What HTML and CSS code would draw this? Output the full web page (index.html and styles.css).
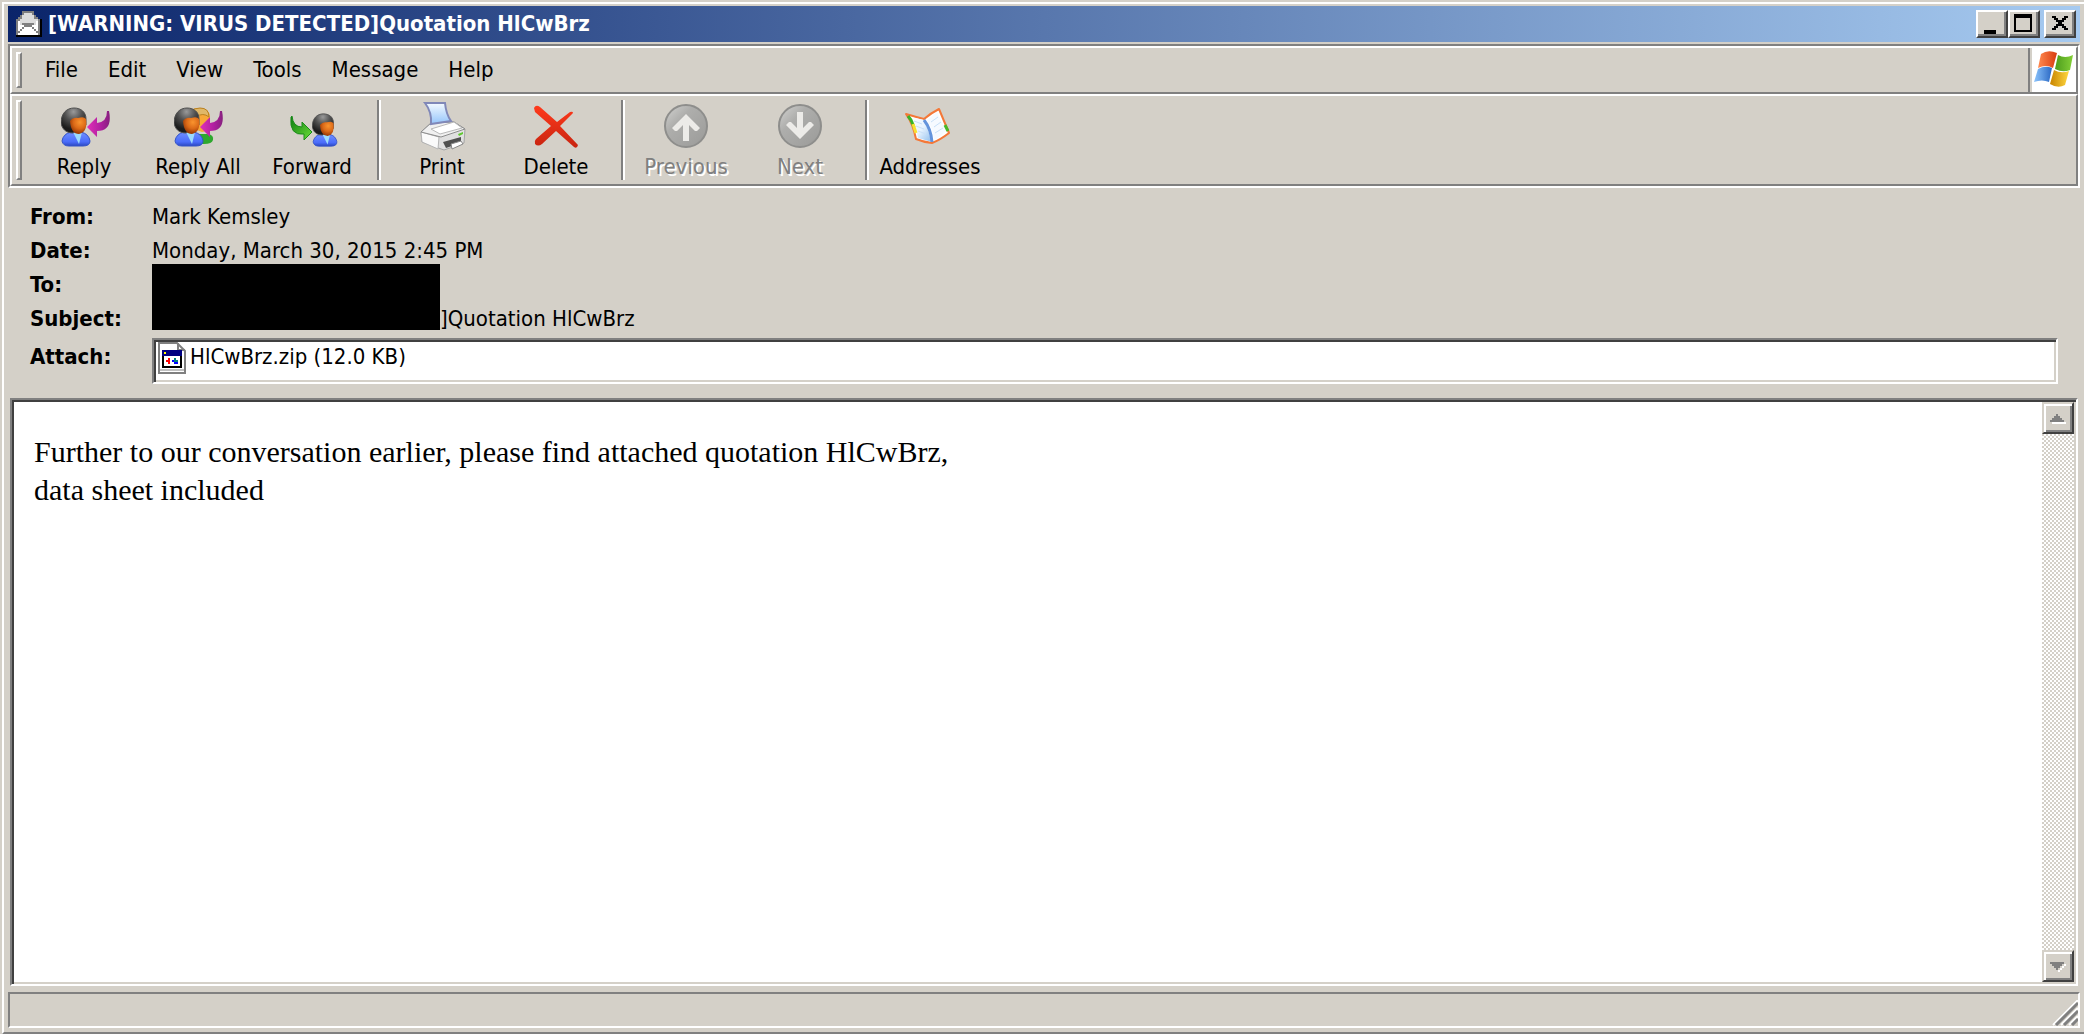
FILE: index.html
```html
<!DOCTYPE html>
<html lang="en">
<head>
    <meta charset="UTF-8">
    <meta name="viewport" content="width=device-width, initial-scale=1.0">
    <title>[WARNING: VIRUS DETECTED]Quotation HlCwBrz</title>
    <link rel="stylesheet" href="styles.css">
</head>
<body>

<!-- shared drawings -->
<svg class="defs" width="0" height="0" aria-hidden="true">
    <defs>
        <radialGradient id="hair" cx="0.5" cy="0.15" r="0.7">
            <stop offset="0" stop-color="#9a9a9a"/>
            <stop offset="0.5" stop-color="#505050"/>
            <stop offset="1" stop-color="#1c1c1c"/>
        </radialGradient>
        <radialGradient id="face" cx="0.6" cy="0.3" r="0.75">
            <stop offset="0" stop-color="#fa942e"/>
            <stop offset="0.5" stop-color="#dc6a18"/>
            <stop offset="1" stop-color="#8a2e00"/>
        </radialGradient>
        <linearGradient id="shirt" x1="0" y1="0" x2="0" y2="1">
            <stop offset="0" stop-color="#7090ff"/>
            <stop offset="0.7" stop-color="#4a6cfa"/>
            <stop offset="1" stop-color="#2c48c0"/>
        </linearGradient>
        <linearGradient id="purple" x1="0" y1="0" x2="1" y2="0">
            <stop offset="0" stop-color="#e030b8"/>
            <stop offset="0.6" stop-color="#b020a0"/>
            <stop offset="1" stop-color="#86207e"/>
        </linearGradient>
        <linearGradient id="green" x1="0" y1="0" x2="1" y2="1">
            <stop offset="0" stop-color="#0c7a10"/>
            <stop offset="1" stop-color="#6ce03a"/>
        </linearGradient>
        <linearGradient id="red" x1="0" y1="0" x2="0" y2="1">
            <stop offset="0" stop-color="#ff3a1c"/>
            <stop offset="1" stop-color="#c82410"/>
        </linearGradient>
        <linearGradient id="disc" x1="0" y1="0" x2="1" y2="1">
            <stop offset="0" stop-color="#d4d4d2"/>
            <stop offset="0.35" stop-color="#aeaeac"/>
            <stop offset="1" stop-color="#9a9a98"/>
        </linearGradient>
        <linearGradient id="paper" x1="0" y1="0" x2="0" y2="1">
            <stop offset="0" stop-color="#f4faff"/>
            <stop offset="1" stop-color="#94c4fa"/>
        </linearGradient>
        <linearGradient id="page" x1="0" y1="0" x2="1" y2="1">
            <stop offset="0" stop-color="#ffffff"/>
            <stop offset="0.5" stop-color="#e8f4ff"/>
            <stop offset="1" stop-color="#8cbcec"/>
        </linearGradient>
        <linearGradient id="flagRed"><stop offset="0" stop-color="#ff8a50"/><stop offset="1" stop-color="#d83c10"/></linearGradient>
        <linearGradient id="flagGreen"><stop offset="0" stop-color="#4c9c1c"/><stop offset="1" stop-color="#84d038"/></linearGradient>
        <linearGradient id="flagBlue"><stop offset="0" stop-color="#8cc4fc"/><stop offset="1" stop-color="#2a68c4"/></linearGradient>
        <linearGradient id="flagYellow"><stop offset="0" stop-color="#c88400"/><stop offset="1" stop-color="#ffd840"/></linearGradient>
    </defs>
    <symbol id="person" viewBox="0 0 30 40">
        <path d="M1 34 Q2 27 10 25 H20 Q28 27 29 34 Q29 39 22 39 H8 Q2 39 1 34z" fill="url(#shirt)" stroke="#3454c8"/>
        <path d="M12 25 h9 l-3 12z" fill="#9cdcfc"/>
        <path d="M0 16 C0 6 6 1 13 1 C20 1 25 5 25 12 V18 L12 26 C5 26 1 22 0 16z" fill="url(#hair)" stroke="#505050"/>
        <path d="M9 14 Q12 10 17 11 Q23 9 25 12 Q27 25 18 27 Q10 27 9 14z" fill="url(#face)"/>
    </symbol>
    <symbol id="arrowLeft" viewBox="0 0 24 28">
        <path d="M0 17 L10 7 V13 Q20 12 20 1 H22 Q26 21 10 21 V27z" fill="url(#purple)"/>
    </symbol>
</svg>

<div class="window">
    <header class="titlebar">
        <svg class="app-icon" width="26" height="26" viewBox="0 0 26 26" aria-hidden="true">
            <path d="M0 8 H2 V6 H4 V4 H6 V0 H18 V4 H20 V6 H22 V8 H24 V24 H0z" fill="#808080"/>
            <path d="M4 8 H6 V4 H8 V2 H16 V4 H18 V8 H22 V14 H18 V12 H6 V14 H4z" fill="#dcdcdc"/>
            <path d="M2 10 H4 V14 H8 V16 H6 V18 H4 V20 H2z M22 10 V20 H20 V18 H18 V16 H16 V14 H20 V10z" fill="#fff"/>
            <path d="M2 24 V22 H4 V20 H6 V18 H8 V16 H16 V18 H18 V20 H20 V22 H22 V24z" fill="#fff"/>
            <path d="M0 25 H25 V8" fill="none" stroke="#000" stroke-width="2"/>
        </svg>
        <h1 class="title">[WARNING: VIRUS DETECTED]Quotation HlCwBrz</h1>
        <div class="caption-buttons">
            <button class="caption-btn" type="button" aria-label="Minimize">
                <svg width="24" height="20" viewBox="0 0 24 20"><path d="M4 16h12v4H4z"/></svg>
            </button>
            <button class="caption-btn" type="button" aria-label="Maximize">
                <svg width="24" height="20" viewBox="0 0 24 20"><path d="M2 0h18v18H2z M4 4v12h14V4z" fill-rule="evenodd"/></svg>
            </button>
            <button class="caption-btn close" type="button" aria-label="Close">
                <svg width="24" height="20" viewBox="0 0 24 20"><path d="M4 2h4v2h2v2h4V4h2V2h4v2h-2v2h-2v2h-2v2h2v2h2v2h2v2h-4v-2h-2v-2h-4v2H8v2H4v-2h2v-2h2v-2h2V8H8V6H6V4H4z"/></svg>
            </button>
        </div>
    </header>

    <div class="rebar">
        <div class="band menu-band">
            <nav class="menu">
                <span class="grip"></span>
                <button type="button">File</button>
                <button type="button">Edit</button>
                <button type="button">View</button>
                <button type="button">Tools</button>
                <button type="button">Message</button>
                <button type="button">Help</button>
            </nav>
            <div class="brand">
                <svg width="40" height="38" viewBox="0 0 40 38" role="img" aria-label="Windows">
                    <path d="M7 4 Q14 -1 23 3 L19 18 Q12 14 4 18z" fill="url(#flagRed)"/>
                    <path d="M24 5 Q31 9 39 5 L36 20 Q29 23 21 19z" fill="url(#flagGreen)"/>
                    <path d="M4 19 Q11 15 18 18 L15 32 Q8 29 0 32z" fill="url(#flagBlue)"/>
                    <path d="M20 20 Q27 24 35 21 L31 35 Q24 39 16 34z" fill="url(#flagYellow)"/>
                </svg>
            </div>
        </div>
        <div class="band toolbar">
            <span class="grip"></span>
            <button class="tool" type="button">
                <svg width="52" height="52" viewBox="-2 0 52 52" aria-hidden="true">
                    <use href="#person" x="1" y="7" width="30" height="40"/>
                    <use href="#arrowLeft" x="27" y="10" width="24" height="28"/>
                </svg>
                Reply
            </button>
            <button class="tool" type="button">
                <svg width="52" height="52" viewBox="-2 0 52 52" aria-hidden="true">
                    <path d="M22 34 H34 Q40 35 39 40 Q38 44 30 44 H22z" fill="#2ea82e"/>
                    <path d="M16 12 Q18 8 26 8 Q36 8 36 18 V24 Q34 32 28 32 L18 28z" fill="#f8a838"/>
                    <path d="M16 12 Q19 8 26 8 Q35 8 35 17 Q29 12 22 17z" fill="#e0b868" stroke="#b88020"/>
                    <use href="#person" x="0" y="7" width="30" height="40"/>
                    <use href="#arrowLeft" x="26" y="10" width="24" height="28"/>
                </svg>
                Reply All
            </button>
            <button class="tool" type="button">
                <svg width="52" height="52" viewBox="-2 0 52 52" aria-hidden="true">
                    <path d="M4 16 Q5 27 14 27 V22 L24 32 L16 40 V34 Q1 36 3 17z" fill="url(#green)" stroke="#1c8c1c"/>
                    <use href="#person" x="24" y="13" width="26" height="34"/>
                </svg>
                Forward
            </button>
            <span class="separator"></span>
            <button class="tool" type="button">
                <svg width="52" height="52" viewBox="-2 0 52 52" aria-hidden="true">
                    <path d="M3 32 L13 23 L36 22 L47 29 L46 43 L26 50 L4 42z" fill="#e0e0e0" stroke="#a4a4a4"/>
                    <path d="M3 32 L21 37 L20 49 L4 42z" fill="#fafafa" stroke="#b4b4b4"/>
                    <path d="M3 32 L13 23 L36 22 L47 29 L23 37z" fill="#f0f0f0" stroke="#8c8c8c"/>
                    <path d="M13 29 L36 22 L44 28 L22 34z" fill="#fff" stroke="#b8b8b8"/>
                    <path d="M7 3 L27 3 Q28 14 33 21 L13 24 Q14 12 7 3z" fill="url(#paper)" stroke="#8088b8" stroke-width="2"/>
                    <path d="M25 42 L43 37 V43 L28 48z" fill="#505050"/>
                    <path d="M33 44 L43 41 L45 44 L34 49z" fill="#fff" stroke="#888"/>
                    <path d="M40 34 L45 32 V34 L41 36z" fill="#60c830"/>
                </svg>
                Print
            </button>
            <button class="tool" type="button">
                <svg width="52" height="52" viewBox="-2 0 52 52" aria-hidden="true">
                    <path d="M2 8 Q4 4 8 7 L25 22 L38 12 Q41 11 41 13 L28 26 L46 45 Q45 49 42 47 L24 31 L10 44 Q6 47 3 44 Q2 41 4 39 L19 26 L3 12z" fill="url(#red)"/>
                </svg>
                Delete
            </button>
            <span class="separator"></span>
            <button class="tool" type="button" disabled>
                <svg width="52" height="52" viewBox="-2 0 52 52" aria-hidden="true">
                    <circle cx="24" cy="26" r="21" fill="url(#disc)" stroke="#8e8e8c" stroke-width="2"/>
                    <path d="M24 14 L38 28 L35 31 H33 L27 25 V41 H21 V25 L15 31 H13 L10 28z" fill="#ecebe8"/>
                </svg>
                Previous
            </button>
            <button class="tool" type="button" disabled>
                <svg width="52" height="52" viewBox="-2 0 52 52" aria-hidden="true">
                    <circle cx="24" cy="26" r="21" fill="url(#disc)" stroke="#8e8e8c" stroke-width="2"/>
                    <path d="M24 39 L38 25 L35 22 H33 L27 28 V12 H21 V28 L15 22 H13 L10 25z" fill="#ecebe8"/>
                </svg>
                Next
            </button>
            <span class="separator"></span>
            <button class="tool" type="button">
                <svg width="52" height="52" viewBox="-2 0 52 52" aria-hidden="true">
                    <path d="M0 14 Q10 17 18 19 Q25 13 33 9 L43 33 Q34 40 26 43 Q17 42 10 39 Q7 24 0 14z" fill="#fff" stroke="#f47838" stroke-width="2" stroke-linejoin="round"/>
                    <path d="M4 17 Q10 26 12 38 L26 42 Q22 30 18 20z" fill="url(#page)"/>
                    <path d="M21 20 L31 12 L40 31 Q33 38 28 40 Q27 28 21 20z" fill="#f6faff"/>
                    <path d="M8 21 L16 24 M10 26 L18 29 M12 31 L20 34 M25 22 L32 17 M28 27 L35 22 M29 33 L37 28" stroke="#c8e0f8"/>
                    <path d="M2 16 L5 20 L8 27" fill="none" stroke="#38b428" stroke-width="3"/>
                    <path d="M7 24 L10 33" fill="none" stroke="#f8e030" stroke-width="3"/>
                    <path d="M39 25 L42 31" fill="none" stroke="#48b828" stroke-width="3"/>
                    <path d="M18 20 Q25 29 26 42" fill="none" stroke="#6494dc" stroke-width="3"/>
                </svg>
                Addresses
            </button>
        </div>
    </div>

    <section class="envelope">
        <dl class="fields">
            <dt>From:</dt>
            <dd>Mark Kemsley</dd>
            <dt>Date:</dt>
            <dd>Monday, March 30, 2015 2:45 PM</dd>
            <dt>To:</dt>
            <dd class="subject"><span class="redacted"></span>]Quotation HlCwBrz</dd>
            <dt>Subject:</dt>
            <dt class="attach-label">Attach:</dt>
            <dd class="attachments">
                <svg width="28" height="32" viewBox="0 0 28 32" aria-hidden="true">
                    <path d="M1 1 H19 L27 9 V31 H1z" fill="#fff" stroke="#808080" stroke-width="2"/>
                    <path d="M20 1 V8 H27" fill="none" stroke="#808080" stroke-width="2"/>
                    <path d="M2 28 H26" stroke="#c0c0c0" stroke-width="2"/>
                    <path d="M4 8 H24 V26 H4z" fill="#000"/>
                    <path d="M6 14 H22 V24 H6z" fill="#fff"/>
                    <path d="M4 8 H24 V14 H4z" fill="#000080"/>
                    <path d="M6 10 h2 v2 h-2z" fill="#ff0"/>
                    <path d="M8 18 h2 v-2 h2 v6 h-2 v-2 h-2z" fill="#f00"/>
                    <path d="M16 16 h2 v2 h2 v2 h-4z" fill="#008080"/>
                    <path d="M14 18 h2 v2 h4 v2 h-4 v-2 h-2z" fill="#00f"/>
                </svg>
                <a href="#">HlCwBrz.zip (12.0 KB)</a>
            </dd>
        </dl>
    </section>

    <main class="message">
        <div class="message-body">
            <p>Further to our conversation earlier, please find attached quotation HlCwBrz,<br>data sheet included</p>
        </div>
        <div class="scrollbar">
            <button type="button" aria-label="Scroll up" disabled>
                <svg width="24" height="24" viewBox="0 0 24 24"><path d="M6 16h14v2H6z" fill="#fff"/><path d="M4 14h14v2H4z M6 12h10v2H6z M8 10h6v2H8z M10 8h2v2h-2z" fill="#808080"/></svg>
            </button>
            <button type="button" aria-label="Scroll down" disabled>
                <svg width="24" height="24" viewBox="0 0 24 24"><path d="M18 10h2v2h-2v2h-2v2h-2v2h-2v-2h2v-2h2v-2h2z" fill="#fff"/><path d="M4 8h14v2H4z M6 10h10v2H6z M8 12h6v2H8z M10 14h2v2h-2z" fill="#808080"/></svg>
            </button>
        </div>
    </main>

    <footer class="statusbar">
        <svg width="26" height="26" viewBox="0 0 26 26" aria-hidden="true">
            <path d="M1 25 L26 0 M9 25 L26 8 M17 25 L26 16" stroke="#fff" stroke-width="2"/>
            <path d="M4 25 L26 3 M12 25 L26 11 M20 25 L26 19" stroke="#808080" stroke-width="3"/>
        </svg>
    </footer>
</div>

</body>
</html>
```
FILE: styles.css
```css
* {
    box-sizing: border-box;
}
body {
    margin: 0;
    background-color: #d4d0c8;
    color: #000;
    font-family: "DejaVu Sans Condensed", Tahoma, sans-serif;
    font-size: 22px;
    line-height: 26px;
}
button {
    font: inherit;
    color: inherit;
    background: none;
    border: none;
    padding: 0;
    margin: 0;
}
svg {
    display: block;
    flex: none;
}
.defs {
    position: absolute;
}
.window {
    display: flex;
    flex-direction: column;
    min-height: calc(100vh - 2px);
    margin: 2px 0 0 2px;
    padding: 2px 4px 4px;
    border: 2px solid #fff;
    border-right: none;
    border-bottom-color: #808080;
}

/* title bar */
.titlebar {
    display: flex;
    align-items: center;
    height: 36px;
    padding: 0 4px 0 8px;
    background: linear-gradient(to right, #0a246a, #a6caf0);
    color: #fff;
}
.title {
    flex: 1;
    margin: 0 0 0 6px;
    font-size: 22px;
    font-weight: bold;
    white-space: nowrap;
}
.caption-buttons {
    display: flex;
}
.caption-btn {
    width: 32px;
    height: 28px;
    padding: 2px;
    background-color: #d4d0c8;
    border: 2px solid;
    border-color: #fff #404040 #404040 #fff;
    box-shadow: inset -2px -2px #808080;
}
.caption-btn.close {
    margin-left: 4px;
}

/* menu and toolbar */
.rebar {
    margin-top: 2px;
    border: 2px solid;
    border-color: #808080 #fff #fff #808080;
}
.band {
    display: flex;
    border: 2px solid;
    border-color: #fff #808080 #808080 #fff;
}
.menu-band {
    height: 48px;
}
.menu {
    display: flex;
    flex: 1;
    align-items: center;
    padding: 4px;
    border-right: 2px solid #808080;
}
.menu button {
    padding: 0 15px;
}
.grip {
    align-self: stretch;
    width: 6px;
    margin-right: 8px;
    border: 2px solid;
    border-color: #fff #808080 #808080 #fff;
}
.brand {
    padding: 2px;
    margin-left: 2px;
    background-color: #fff;
}
.toolbar {
    height: 92px;
    padding: 4px;
}
.toolbar .grip {
    margin-right: 5px;
}
.tool {
    display: flex;
    flex-direction: column;
    align-items: center;
    gap: 2px;
    width: 114px;
    white-space: nowrap;
}
.tool:disabled {
    color: #808080;
    text-shadow: 2px 2px #fff;
}
.separator {
    width: 4px;
    margin: 0 4px 0 8px;
    border-left: 2px solid #808080;
    border-right: 2px solid #fff;
}

/* message header */
.envelope {
    padding: 12px 22px 14px;
}
.fields {
    display: grid;
    grid-template-columns: 122px 1fr;
    grid-template-rows: repeat(4, 34px) auto;
    margin: 0;
    line-height: 34px;
}
.fields dt {
    grid-column: 1;
    font-weight: bold;
}
.fields dd {
    grid-column: 2;
    margin: 0;
}
.fields .subject {
    grid-row: 3 / span 2;
    display: flex;
    align-items: flex-end;
}
.redacted {
    align-self: flex-start;
    width: 288px;
    height: 66px;
    margin-top: -4px;
    background-color: #000;
}
.fields .attach-label {
    padding-top: 4px;
}
.fields .attachments {
    display: flex;
    gap: 4px;
    height: 46px;
    margin-top: 2px;
    padding: 0 4px;
    background-color: #fff;
    border: 2px solid;
    border-color: #808080 #fff #fff #808080;
    box-shadow: inset 2px 2px #404040, inset -2px -2px #d4d0c8;
}
.attachments svg {
    margin-top: 2px;
}
.attachments a {
    color: inherit;
    text-decoration: none;
}

/* message text */
.message {
    display: flex;
    flex: 1;
    margin: 0 2px;
    padding: 2px;
    background-color: #fff;
    border: 2px solid;
    border-color: #808080 #fff #fff #808080;
    box-shadow: inset 2px 2px #404040, inset -2px -2px #d4d0c8;
}
.message-body {
    flex: 1;
    padding: 31px 20px;
    font-family: "Liberation Serif", "Times New Roman", serif;
    font-size: 30px;
    line-height: 38px;
}
.message-body p {
    margin: 0;
}
.scrollbar {
    display: flex;
    flex-direction: column;
    justify-content: space-between;
    width: 32px;
    background: conic-gradient(#fff 25%, #d4d0c8 0 50%, #fff 0 75%, #d4d0c8 0) 0 0 / 4px 4px;
}
.scrollbar button {
    width: 32px;
    height: 32px;
    padding: 2px;
    background-color: #d4d0c8;
    border: 2px solid;
    border-color: #d4d0c8 #404040 #404040 #d4d0c8;
    box-shadow: inset 2px 2px #fff, inset -2px -2px #808080;
}

/* status bar */
.statusbar {
    display: flex;
    justify-content: flex-end;
    align-items: flex-end;
    height: 36px;
    margin-top: 6px;
    border: 2px solid;
    border-color: #808080 #fff #fff #808080;
}
```
